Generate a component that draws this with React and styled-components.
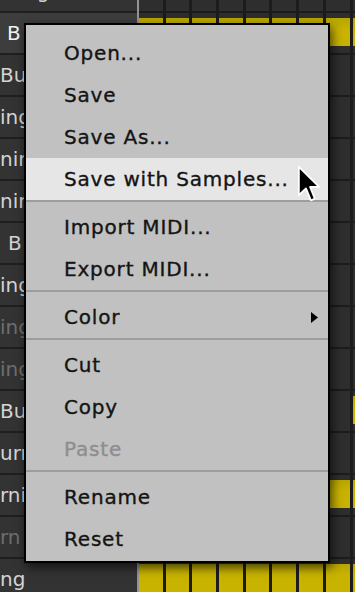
import React from 'react'
import styled, { createGlobalStyle } from 'styled-components'

const Global = createGlobalStyle`
    html, body {
        margin: 0;
        padding: 0;
        background: #2e2e2e;
        overflow: hidden;
    }
`

const Page = styled.div`
    position: relative;
    width: 355px;
    height: 592px;
    overflow: hidden;
    display: flex;
    font-family: "DejaVu Sans", "Liberation Sans", sans-serif;
`

const Sidebar = styled.div`
    width: 137px;
    flex-shrink: 0;
    border-right: 2px solid #939393;
    background: #1f1f1f;
    display: flex;
    flex-direction: column;
    margin-top: -29px;
`

const SideRow = styled.div`
    height: 40px;
    flex-shrink: 0;
    margin-bottom: 2px;
    background: ${p => (p.selected ? '#3d3d3d' : '#333333')};
    color: ${p => (p.dim ? '#6e6e6e' : p.selected ? '#f2f2f2' : '#d4d4d4')};
    font-size: 20px;
    display: flex;
    align-items: center;
    padding-left: ${p => p.pad || 0}px;
    white-space: nowrap;
    overflow: hidden;
`

const Lanes = styled.div`
    flex: 1;
    min-width: 0;
    overflow: hidden;
    display: flex;
    flex-direction: column;
    margin-top: -29px;
    background: #1c1c1c;
`

const Lane = styled.div`
    height: 40px;
    flex-shrink: 0;
    margin-bottom: 2px;
    display: grid;
    grid-template-columns: repeat(9, 23.7px);
    column-gap: 3px;
`

const Cell = styled.div`
    background: #2e2e2e;
    display: flex;
    flex-direction: column;
    padding-top: 5px;
`

const Note = styled.div`
    height: 28px;
    background: linear-gradient(#b9a500, #c8b300 40%);
`

const Menu = styled.div`
    position: absolute;
    left: 24px;
    top: 23px;
    width: 306px;
    height: 540px;
    background: #c1c1c1;
    border: 2px solid #000;
    box-shadow: 2px 4px 10px rgba(0, 0, 0, 0.65);
    padding: 7px 0 4px;
    box-sizing: border-box;
    display: flex;
    flex-direction: column;
`

const Item = styled.div`
    height: 42px;
    flex-shrink: 0;
    display: flex;
    align-items: center;
    justify-content: space-between;
    padding: 0 9px 0 38px;
    font-size: 20px;
    letter-spacing: 0.8px;
    -webkit-text-stroke: 0.35px ${p => (p.disabled ? '#8e8e8e' : '#141414')};
    color: ${p => (p.disabled ? '#8e8e8e' : '#141414')};
    background: ${p => (p.hover ? '#e6e6e6' : 'transparent')};
`

const Separator = styled.div`
    height: 2px;
    background: #9d9d9d;
    margin-bottom: 4px;
    flex-shrink: 0;
`

const Cursor = styled.svg`
    position: absolute;
    left: 297px;
    top: 165px;
`

const sideRows = [
    { text: 'ng', pad: 24 },
    { text: 'B', pad: 7, selected: true },
    { text: 'Bur', pad: 0 },
    { text: 'ing', pad: 0 },
    { text: 'nin', pad: 0 },
    { text: 'nin', pad: 0 },
    { text: 'B', pad: 8 },
    { text: 'ing', pad: 0 },
    { text: 'ing', pad: 0, dim: true },
    { text: 'ing', pad: 0, dim: true },
    { text: 'Bur', pad: 0 },
    { text: 'urn', pad: 0 },
    { text: 'rni', pad: 0 },
    { text: 'rn', pad: 0, dim: true },
    { text: 'ng', pad: 0 },
]

// which columns hold a note, per lane
const notes = {
    1: [0, 1, 2, 3, 4, 5, 6, 7, 8],
    10: [8],
    12: [7, 8],
    14: [0, 1, 2, 3, 4, 5, 6, 7, 8],
}

const menu = [
    [{ label: 'Open...' }, { label: 'Save' }, { label: 'Save As...' }, { label: 'Save with Samples...', hover: true }],
    [{ label: 'Import MIDI...' }, { label: 'Export MIDI...' }],
    [{ label: 'Color', sub: true }],
    [{ label: 'Cut' }, { label: 'Copy' }, { label: 'Paste', disabled: true }],
    [{ label: 'Rename' }, { label: 'Reset' }],
]

const App = () => {
    return (
        <Page>
            <Global />
            <Sidebar>
                {sideRows.map((r, i) => (
                    <SideRow key={i} pad={r.pad} dim={r.dim} selected={r.selected}>{r.text}</SideRow>
                ))}
            </Sidebar>
            <Lanes>
                {sideRows.map((_, i) => (
                    <Lane key={i}>
                        {Array.from({ length: 9 }).map((__, c) => (
                            <Cell key={c}>{notes[i] && notes[i].includes(c) && <Note />}</Cell>
                        ))}
                    </Lane>
                ))}
            </Lanes>

            <Menu>
                {menu.map((group, g) => (
                    <React.Fragment key={g}>
                        {g > 0 && <Separator />}
                        {group.map(it => (
                            <Item key={it.label} hover={it.hover} disabled={it.disabled}>
                                <span>{it.label}</span>
                                {it.sub && (
                                    <svg width="8" height="11" viewBox="0 0 8 11">
                                        <path d="M0 0 L7 5.5 L0 11 Z" fill="#000" />
                                    </svg>
                                )}
                            </Item>
                        ))}
                    </React.Fragment>
                ))}
            </Menu>

            <Cursor width="25" height="39" viewBox="0 0 14 22">
                <path d="M1 1 L1 17 L5 13.2 L7.8 20 L10 19 L7.3 12.4 L12.4 12.4 Z" fill="#000" stroke="#fff" strokeWidth="1" strokeLinejoin="round" />
            </Cursor>
        </Page>
    )
}

export default App
